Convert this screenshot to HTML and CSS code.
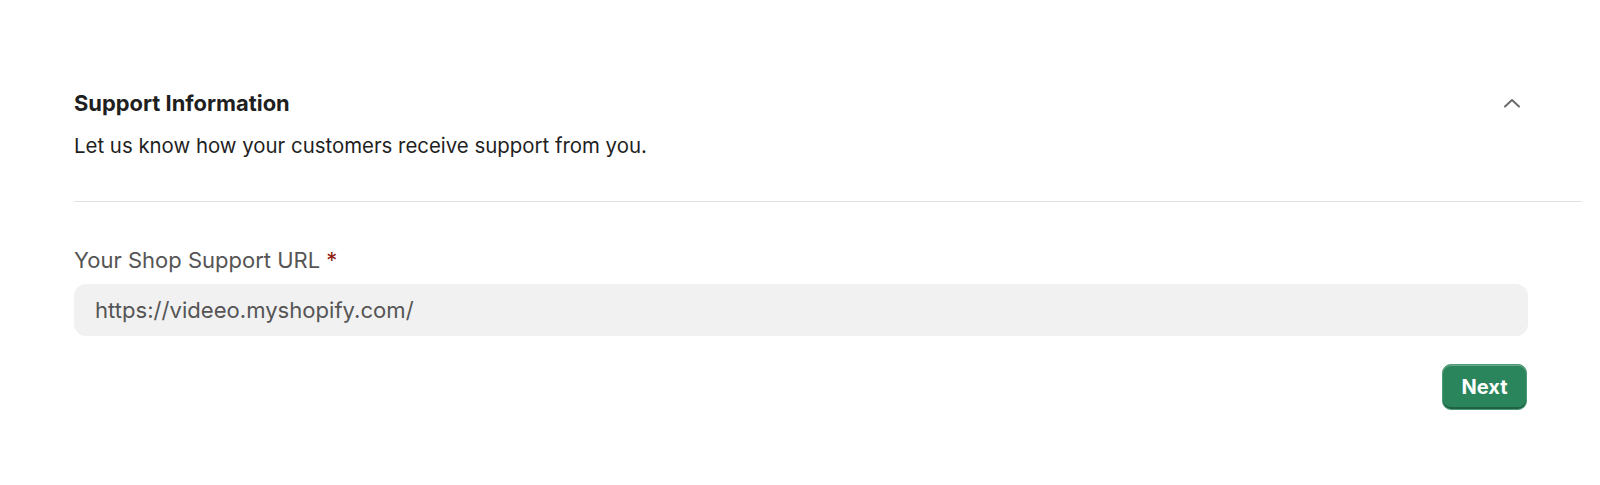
FILE: index.html
```html
<!DOCTYPE html>
<html lang="en">
<head>
<meta charset="utf-8">
<title>Support Information</title>
<link rel="stylesheet" href="styles.css">
</head>
<body>
<section class="section">
  <div class="inner">
    <div class="header">
      <h2 class="title">Support Information</h2>
      <button class="toggle" aria-label="Collapse">
        <svg width="18" height="10" viewBox="0 0 18 10" fill="none" stroke="#6b6b6b" stroke-width="2" stroke-linecap="round" stroke-linejoin="round"><path d="M2 8.5 L9 2 L16 8.5"/></svg>
      </button>
    </div>
    <p class="desc">Let us know how your customers receive support from you.</p>
  </div>
  <hr class="divider">
  <div class="inner">
    <label class="label">Your Shop Support URL <span class="req">*</span></label>
    <div class="input">https://videeo.myshopify.com/</div>
    <div class="actions">
      <button class="btn">Next</button>
    </div>
  </div>
</section>
</body>
</html>
```
FILE: styles.css
```css
html, body {
  margin: 0;
  padding: 0;
  background: #ffffff;
  font-family: Inter, "Noto Sans", sans-serif;
}
.section {
  margin-left: 74px;
  width: 1508px;
  padding-top: 88px;
}
.inner {
  padding-right: 54px;
}
.header {
  display: flex;
  align-items: center;
  justify-content: space-between;
  height: 30px;
}
.title {
  margin: 0;
  font-size: 21.9px;
  font-weight: 700;
  color: #1f1f1f;
  line-height: 30px;
}
.toggle {
  border: 0;
  background: none;
  padding: 0;
  margin-right: 7px;
  width: 18px;
  height: 10px;
  display: flex;
}
.desc {
  margin: 14px 0 0 0;
  font-size: 20.4px;
  line-height: 28px;
  color: #1f1f1f;
}
.divider {
  margin: 41px 0 0 0;
  border: 0;
  height: 1px;
  background: #e3e3e3;
}
.label {
  display: block;
  margin-top: 44px;
  font-size: 22px;
  line-height: 28px;
  color: #555555;
}
.req {
  color: #8f1a10;
}
.input {
  margin-top: 10px;
  height: 52px;
  box-sizing: border-box;
  background: #f1f1f1;
  border-radius: 12px;
  padding-left: 21px;
  display: flex;
  align-items: center;
  font-size: 22.1px;
  color: #555555;
}
.actions {
  display: flex;
  justify-content: flex-end;
  margin-top: 28px;
  padding-right: 1px;
}
.btn {
  width: 85px;
  height: 46px;
  border-radius: 9px;
  border: 1px solid #4f9a77;
  background: #2b855c;
  box-shadow: inset 0 1px 0 rgba(255,255,255,0.3), inset 0 -2px 0 #1f6243;
  color: #ffffff;
  font-family: Inter, "Noto Sans", sans-serif;
  font-size: 20px;
  font-weight: 700;
  padding: 0;
}
```
